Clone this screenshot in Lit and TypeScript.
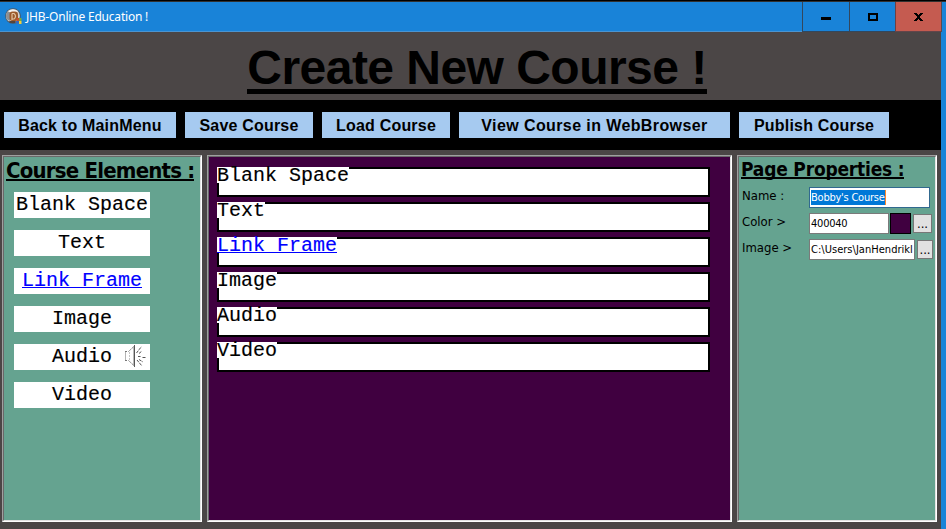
import { LitElement, html, css, svg } from "lit";
import { customElement, property } from "lit/decorators.js";
import { classMap } from "lit/directives/class-map.js";

const ELEMENTS = ["Blank Space", "Text", "Link Frame", "Image", "Audio", "Video"];

const appIcon = svg`<svg width="17" height="17" viewBox="0 0 17 17">
  <circle cx="8" cy="8" r="7.8" fill="#4a5560"/>
  <circle cx="7.900" cy="7.900" r="7" fill="#d0cfcd"/>
  <path d="M1.500 11Q0 7 3 3l2 1v9z" fill="#8d9094"/>
  <path d="M3 3q5-3 10 0l-1 1H4z" fill="#f4f2ef"/>
  <rect x="4.500" y="3.500" width="8.500" height="9.500" rx="3" fill="#9b5a2a"/>
  <path d="M7 5.500v6.500M7 5.500h2q1.500 1 1.500 2.800T9 11H7" fill="none" stroke="#e3c4a2" stroke-width="1.200"/>
  <path d="M4 13h7l-1 2H5z" fill="#56443a"/>
  <rect x="11.500" y="10" width="2.500" height="3" fill="#c7502e"/>
  <rect x="14" y="10" width="2.500" height="3" fill="#7fa83a"/>
  <rect x="11" y="13" width="3" height="2.500" fill="#3768bc"/>
  <rect x="14" y="13" width="2.500" height="3" fill="#f3cf38"/>
</svg>`;

const speakerIcon = svg`<svg width="22" height="24" viewBox="0 0 22 24" fill="none">
  <g shape-rendering="crispEdges">
    <path d="M1.500 8v8" stroke="#b4b4b4"/>
    <path d="M1 7.500h3M1 16.500h3" stroke="#777" stroke-dasharray="2 1"/>
    <path d="M5.500 8v8" stroke="#c4c4c4" stroke-dasharray="2 1"/>
    <path d="M10.500 1v22" stroke="#555"/>
    <path d="M9.500 2v20" stroke="#bbb"/>
  </g>
  <path d="M4.500 7.500L11 1.500M4.500 16.500L11 22.500" stroke="#666" stroke-dasharray="1.500 1"/>
  <path d="M12.500 9l5-6.500M15 9.500l3-2.500M14 12.500h2.500M18.500 13.500h3M13 16l5 6M15 15.500l4 2.500" stroke="#555" stroke-dasharray="3 1"/>
</svg>`;

@customElement("course-panel")
export class CoursePanel extends LitElement {
  static styles = css`
    :host { display: block; box-sizing: border-box; height: 367px; border: 1px solid; border-color: #a0a0a0 #fff #fff #a0a0a0; }
    .inner { box-sizing: border-box; height: 100%; border: 1px solid; border-color: #696969 #e3e3e3 #e3e3e3 #696969; overflow: hidden; }
  `;
  render() {
    return html`<div class="inner"><slot></slot></div>`;
  }
}

@customElement("app-root")
export class AppRoot extends LitElement {
  @property() courseName = "Bobby's Course";
  @property() color = "400040";
  @property() image = "C:\\Users\\JanHendrikl";

  static styles = css`
    :host { display: flex; flex-direction: column; box-sizing: border-box; width: 946px; height: 529px; overflow: hidden;
      background: #1983d8; border-top: 1px solid #000; color: #000; white-space: nowrap; }
    svg { display: block; flex: none; }
    .titlebar { display: flex; box-sizing: border-box; height: 31px; border-top: 1px solid #303030; }
    .caption { flex: 1; display: flex; align-items: center; gap: 4px; padding-left: 5px; border-bottom: 1px solid #4b94d0;
      font: 12px "Noto Sans", sans-serif; letter-spacing: -0.2px; color: #fff; }
    .win { display: flex; align-items: center; justify-content: center; box-sizing: border-box; width: 47px; border-left: 1px solid #33475c; border-bottom: 1px solid #33475c; }
    .win.max { width: 46px; }
    .win.close { width: 47px; background: #c55b50; border-right: 1px solid #5a4a50; border-left-color: #6d4043; border-bottom-color: #63454a; margin-right: 4px; }
    .body { flex: 1; width: 941px; background: #4b4646; }
    .heading { display: flex; justify-content: center; height: 68px; box-sizing: border-box; padding-left: 13px; }
    .heading span { align-self: flex-start; margin-top: 8px; height: 54px; box-sizing: border-box; border-bottom: 5px solid #000;
      font: bold 48px/55px "Liberation Sans", sans-serif; letter-spacing: -0.53px; }
    .toolbar { display: flex; gap: 9px; height: 50px; box-sizing: border-box; padding: 12px 4px; background: #000; }
    .btn { height: 26px; background: #a6caf0; text-align: center; font: bold 16px/27px "Liberation Sans", sans-serif; letter-spacing: 0.2px; }
    .w172 { width: 172px; } .w128 { width: 128px; } .w271 { width: 271px; letter-spacing: 0.4px; } .w150 { width: 150px; }
    .columns { display: flex; gap: 5px; padding: 5px 2px; }
    .side { width: 200px; background: #65a390; }
    .page { width: 525px; background: #400040; }
    .title { display: block; width: fit-content; margin: 2px 0 0 2px; border-bottom: 2px solid #000; box-sizing: border-box; height: 22px;
      font: bold 22px/24px "DejaVu Sans Condensed", "DejaVu Sans", sans-serif; letter-spacing: -0.8px; }
    .title.small { font-size: 19px; line-height: 21px; height: 20px; letter-spacing: -0.2px; }
    .mono { font: 20px/26px "Liberation Mono", monospace; -webkit-text-stroke: 0.15px currentColor; }
    .link { color: #0000ff; }
    .palette { display: grid; gap: 12px; padding: 11px 10px; }
    .tile { display: grid; grid-template-columns: 1fr auto 1fr; width: 136px; height: 26px; background: #fff; }
    .tile .mono { grid-column: 2; box-sizing: border-box; height: 20px; line-height: 25px; }
    .tile .mono.link, .tag.link { border-bottom: 1px solid #00f; }
    .tile .spk { justify-self: end; margin: 0 4px 0 0; }
    .blocks { display: grid; gap: 5px; padding: 10px 8px; }
    .block { width: 493px; height: 30px; box-sizing: border-box; background: #fff; border: 2px solid #000; }
    .tag { display: block; width: fit-content; height: 16px; box-sizing: border-box; line-height: 17px; margin: -2px 0 0 -2px; background: #fff; }
    .props { display: grid; gap: 5px; padding: 8px 3px; font: 13px "DejaVu Sans Condensed", "DejaVu Sans", sans-serif; }
    .row { display: flex; height: 21px; }
    .row label { width: 67px; line-height: 18px; }
    .field { box-sizing: border-box; height: 21px; width: 80px; border: 1px solid #7a7a7a; background: #fff; padding: 2px 1px; overflow: hidden;
      font: 11px/16px "DejaVu Sans Condensed", "DejaVu Sans", sans-serif; letter-spacing: -0.23px; }
    .field.name { width: 121px; border-color: #31698f; }
    .field.path { width: 106px; letter-spacing: 0.03px; }
    .sel { display: inline-block; height: 15px; background: #0078d7; color: #fff; border-right: 1px solid #ff8728; }
    .swatch { box-sizing: border-box; width: 21px; height: 21px; margin-left: 1px; border: 1px solid #000; background: #400040; }
    .more { box-sizing: border-box; width: 19px; height: 19px; margin: 1px 0 0 2px; border: 1px solid #777; background: #e1e1e1; text-align: center; line-height: 17px; }
    .more.thin { width: 16px; }
  `;

  private tile(name: string) {
    return html`<div class="tile">
      <span class=${classMap({ mono: true, link: name === "Link Frame" })}>${name}</span>
      ${name === "Audio" ? html`<span class="spk">${speakerIcon}</span>` : ""}
    </div>`;
  }

  render() {
    return html`
      <div class="titlebar">
        <div class="caption">${appIcon}<span>JHB-Online Education !</span></div>
        <div class="win"><svg width="10" height="12"><path d="M0 6h10v3H0z"/></svg></div>
        <div class="win max"><svg width="10" height="8"><path d="M1 1h8v6H1z" fill="none" stroke="#000" stroke-width="2"/></svg></div>
        <div class="win close"><svg width="9" height="8" shape-rendering="crispEdges"><path d="M0 0h3v1h1v1h1V1h1V0h3v1H8v1H7v1H6v2h1v1h1v1h1v1H6V7H5V6H4v1H3v1H0V7h1V6h1V5h1V3H2V2H1V1H0z"/></svg></div>
      </div>
      <div class="body">
        <div class="heading"><span>Create New Course !</span></div>
        <div class="toolbar">
          <div class="btn w172">Back to MainMenu</div>
          <div class="btn w128">Save Course</div>
          <div class="btn w128">Load Course</div>
          <div class="btn w271">View Course in WebBrowser</div>
          <div class="btn w150">Publish Course</div>
        </div>
        <div class="columns">
          <course-panel class="side">
            <span class="title">Course Elements :</span>
            <div class="palette">${ELEMENTS.map((n) => this.tile(n))}</div>
          </course-panel>
          <course-panel class="page">
            <div class="blocks">
              ${ELEMENTS.map((n) => html`<div class="block"><span class=${classMap({ mono: true, tag: true, link: n === "Link Frame" })}>${n}</span></div>`)}
            </div>
          </course-panel>
          <course-panel class="side">
            <span class="title small">Page Properties :</span>
            <div class="props">
              <div class="row"><label>Name :</label><div class="field name"><span class="sel">${this.courseName}</span></div></div>
              <div class="row"><label>Color &gt;</label><div class="field">${this.color}</div><div class="swatch"></div><div class="more">...</div></div>
              <div class="row"><label>Image &gt;</label><div class="field path">${this.image}</div><div class="more thin">...</div></div>
            </div>
          </course-panel>
        </div>
      </div>`;
  }
}
